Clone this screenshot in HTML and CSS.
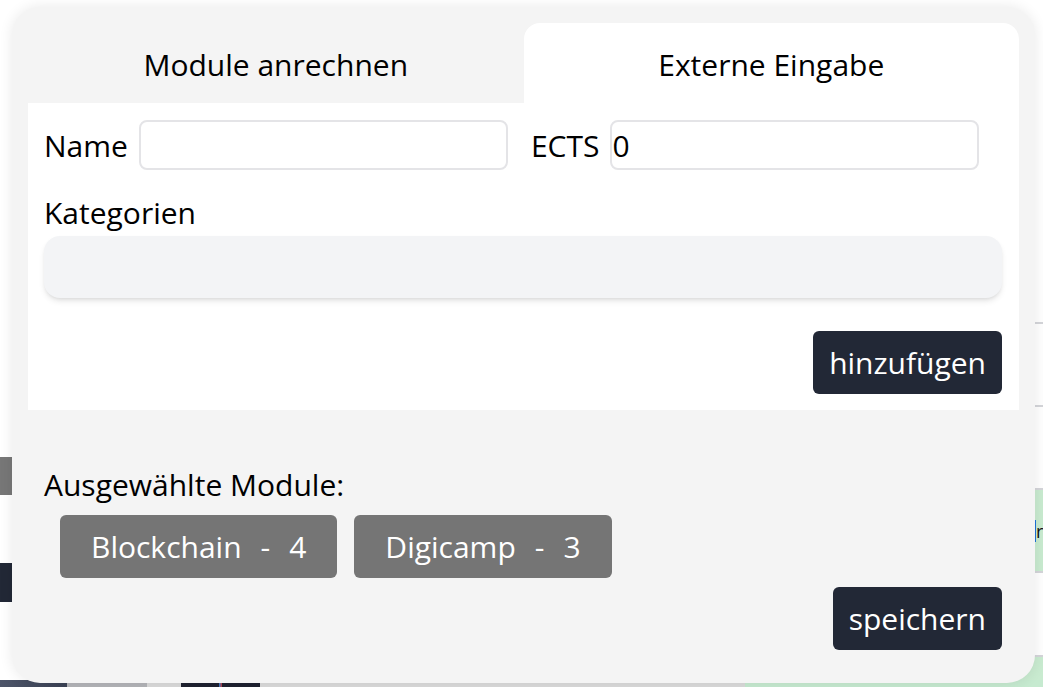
FILE: index.html
```html
<!DOCTYPE html>
<html lang="de">
<head>
<meta charset="utf-8">
<title>Externe Eingabe</title>
<link rel="stylesheet" href="styles.css">
</head>
<body>
<div class="backdrop">
  <div class="bg-block bg-gray"></div>
  <div class="bg-block bg-dark"></div>
  <div class="bg-line l1"></div>
  <div class="bg-line l2"></div>
  <div class="bg-line l3"></div>
  <div class="bg-line l4"></div>
  <div class="bg-line l5"></div>
  <div class="bg-green g1"><span class="bg-text">r</span></div>
  <div class="bg-green g2"></div>
  <div class="bottom-strip">
    <div class="bs slate"></div>
    <div class="bs mid"></div>
    <div class="bs light1"></div>
    <div class="bs dark1"></div>
    <div class="bs accent"></div>
    <div class="bs dark2"></div>
    <div class="bs light2"></div>
    <div class="bs green"></div>
  </div>
</div>

<div class="modal">
  <div class="tabs">
    <div class="tab">Module anrechnen</div>
    <div class="tab tab-active">Externe Eingabe</div>
  </div>
  <div class="panel">
    <div class="field-row">
      <label class="field">
        <span class="label">Name</span>
        <input class="input" type="text" value="">
      </label>
      <label class="field">
        <span class="label">ECTS</span>
        <input class="input" type="text" value="0">
      </label>
    </div>
    <div class="cat-label">Kategorien</div>
    <div class="cat-box"></div>
    <div class="btn-row">
      <button class="btn">hinzufügen</button>
    </div>
  </div>
  <div class="selected">
    <div class="sel-label">Ausgewählte Module:</div>
    <div class="chips">
      <div class="chip"><span>Blockchain</span><span class="sep">-</span><span>4</span></div>
      <div class="chip"><span>Digicamp</span><span class="sep">-</span><span>3</span></div>
    </div>
    <div class="btn-row save-row">
      <button class="btn">speichern</button>
    </div>
  </div>
</div>
</body>
</html>
```

FILE: styles.css
```css
* { box-sizing: border-box; }

html, body {
  margin: 0;
  padding: 0;
  width: 1043px;
  height: 687px;
  overflow: hidden;
  background: #ffffff;
  font-family: "Open Sans", "Noto Sans", sans-serif;
  color: #000;
}

.backdrop {
  position: absolute;
  inset: 0;
}

.bg-block { position: absolute; left: 0; width: 120px; }
.bg-gray { top: 457px; height: 38px; background: #777777; }
.bg-dark { top: 563px; height: 39px; background: #222836; }

.bg-line {
  position: absolute;
  left: 1000px;
  width: 43px;
  height: 2px;
  background: #d4d5d9;
}
.l1 { top: 322px; }
.l2 { top: 405px; }
.l3 { top: 488px; }
.l4 { top: 571px; }
.l5 { top: 655px; }

.bg-green {
  position: absolute;
  left: 1000px;
  width: 43px;
  background: #c9ebd0;
}
.g1 { top: 490px; height: 81px; }
.g2 { top: 657px; height: 30px; }

.bg-text {
  position: absolute;
  left: 35px;
  top: 30px;
  font-size: 18px;
  line-height: 22px;
  color: #111;
  border-left: 1px solid #1d72d8;
}

.bottom-strip {
  position: absolute;
  left: 0;
  right: 0;
  top: 680px;
  height: 7px;
  display: flex;
}
.bs { height: 100%; }
.slate { width: 67px; background: linear-gradient(90deg, #4d5569, #3b4255); }
.mid { width: 80px; background: #b3b4b8; }
.light1 { width: 34px; background: #dadada; }
.dark1 { width: 38px; background: #1f2230; }
.accent { width: 3px; background: linear-gradient(90deg, #2f7fd0, #c23a3a); }
.dark2 { width: 38px; background: #1f2230; }
.light2 { width: 485px; background: #dadada; }
.green { flex: 1; background: #c6ead0; }

.modal {
  position: absolute;
  left: 12px;
  top: 7px;
  width: 1023px;
  height: 676px;
  background: #f4f4f4;
  border-radius: 28px;
  padding: 16px;
  box-shadow: 0 0 14px rgba(0, 0, 0, 0.09);
  display: flex;
  flex-direction: column;
}

.tabs {
  display: flex;
  height: 80px;
}

.tab {
  flex: 1;
  display: flex;
  align-items: center;
  justify-content: center;
  font-size: 30px;
  line-height: 41px;
  padding-top: 2px;
}

.tab-active {
  background: #ffffff;
  border-radius: 16px 16px 0 0;
}

.panel {
  background: #ffffff;
  padding: 17px 17px 16px 16px;
  display: flex;
  flex-direction: column;
}

.field-row {
  display: flex;
  align-items: center;
  gap: 23px;
  height: 50px;
}

.field {
  display: flex;
  align-items: center;
  gap: 11px;
}

.label {
  font-size: 30px;
  line-height: 41px;
}

.input {
  width: 369px;
  height: 50px;
  border: 2px solid #e4e4e7;
  border-radius: 8px;
  background: #fff;
  padding: 0 0 0 0;
  font-family: inherit;
  font-size: 30px;
  color: #000;
  outline: none;
}

.cat-label {
  margin-top: 22px;
  font-size: 30px;
  line-height: 41px;
}

.cat-box {
  margin-top: 3px;
  height: 62px;
  background: #f3f4f6;
  border-radius: 16px;
  box-shadow: 0 4px 6px -1px rgba(0, 0, 0, 0.1), 0 2px 4px -2px rgba(0, 0, 0, 0.1);
}

.btn-row {
  display: flex;
  justify-content: flex-end;
  margin-top: 33px;
}

.btn {
  background: #222836;
  color: #ffffff;
  border: none;
  border-radius: 6px;
  padding: 11px 16px;
  font-family: inherit;
  font-size: 30px;
  line-height: 41px;
}

.selected {
  display: flex;
  flex-direction: column;
  padding: 0 17px 0 16px;
}

.sel-label {
  margin-top: 54px;
  font-size: 30px;
  line-height: 41px;
}

.chips {
  display: flex;
  gap: 17px;
  margin-top: 10px;
  padding-left: 16px;
}

.chip {
  background: #757575;
  color: #ffffff;
  border-radius: 6px;
  padding: 11px 31px;
  font-size: 30px;
  line-height: 41px;
  display: flex;
}

.sep {
  margin: 0 19px;
}

.save-row {
  margin-top: 9px;
}
```
